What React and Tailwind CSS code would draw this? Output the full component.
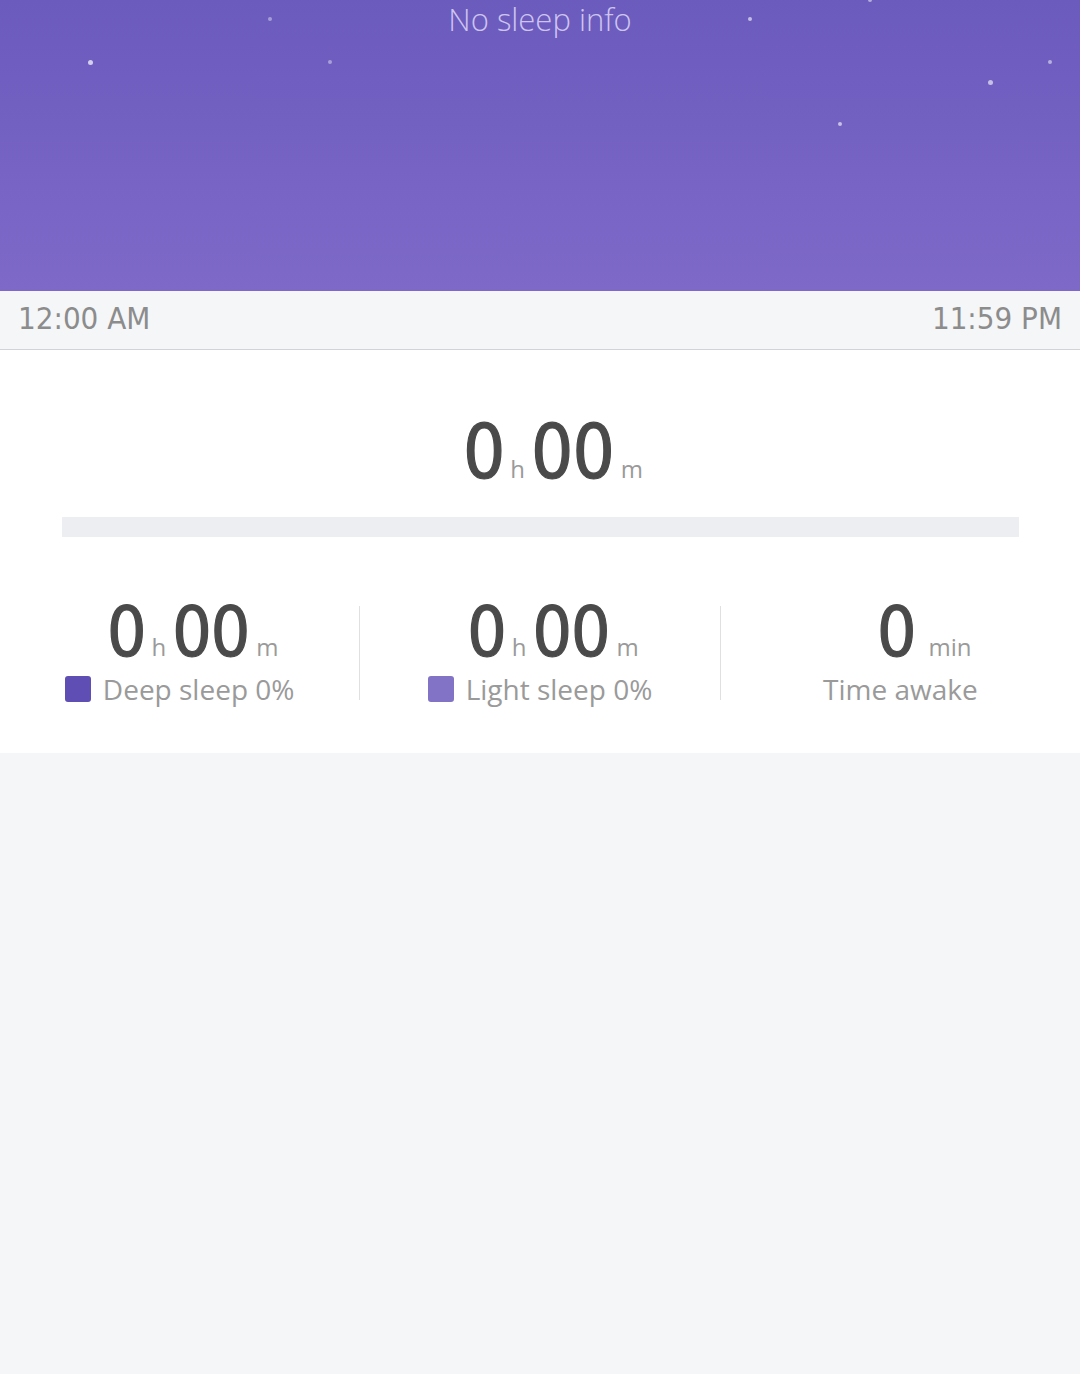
import React from "react";

const stars = [
  { x: 90, y: 62, s: 5, o: "opacity-70" },
  { x: 270, y: 19, s: 4, o: "opacity-40" },
  { x: 330, y: 62, s: 4, o: "opacity-40" },
  { x: 750, y: 19, s: 4, o: "opacity-60" },
  { x: 840, y: 124, s: 4, o: "opacity-60" },
  { x: 990, y: 82, s: 5, o: "opacity-60" },
  { x: 1050, y: 62, s: 4, o: "opacity-50" },
  { x: 870, y: 0, s: 4, o: "opacity-50" },
];

const digit = { fontFamily: "'DejaVu Sans Condensed', Roboto, sans-serif" };
const body = { fontFamily: "'Open Sans', 'Noto Sans', sans-serif" };

const HM = ({ size }) => (
  <div className="flex items-baseline leading-none" style={digit}>
    <span className={`${size} text-[#4a4a4a] tracking-[-1px] [-webkit-text-stroke:1.2px_#4a4a4a]`}>0</span>
    <span className="text-[24px] text-[#9a9a9a] mx-[6px]" style={body}>h</span>
    <span className={`${size} text-[#4a4a4a] tracking-[-1px] [-webkit-text-stroke:1.2px_#4a4a4a]`}>00</span>
    <span className="text-[24px] text-[#9a9a9a] ml-[7px]" style={body}>m</span>
  </div>
);

const Stat = ({ children, label, swatch }) => (
  <div className="flex-1 flex flex-col items-center">
    {children}
    <div className="mt-[4px] flex items-center gap-[12px] text-[28px] leading-[36px] text-[#9a9a9a]" style={body}>
      {swatch && <span className={`w-[26px] h-[26px] rounded-[3px] ${swatch}`} />}
      {label}
    </div>
  </div>
);

export default function App() {
  return (
    <div className="w-[1080px] min-h-[1374px] bg-[#f5f6f8]">
      {/* sky header */}
      <div className="relative h-[291px] bg-gradient-to-b from-[#6b5bbd] to-[#7e69c8] overflow-hidden">
        {stars.map((st, i) => (
          <span
            key={i}
            className={`absolute rounded-full bg-white ${st.o}`}
            style={{ left: st.x - st.s / 2, top: st.y - st.s / 2, width: st.s, height: st.s }}
          />
        ))}
        <div className="pt-[2px] text-center text-[31px] leading-[34px] text-[#cdc5f0] font-light" style={body}>
          No sleep info
        </div>
      </div>

      {/* time axis */}
      <div className="h-[59px] flex items-center justify-between px-[18px] pb-[3px] bg-[#f5f6f8] border-b border-[#d2d3d6] text-[31px] text-[#8c8c8c]" style={digit}>
        <span>12:00 AM</span>
        <span>11:59 PM</span>
      </div>

      {/* summary */}
      <div className="bg-white h-[403px] flex flex-col items-center">
        <div className="mt-[65px] pl-[26px]">
          <HM size="text-[74px]" />
        </div>
        <div className="mt-[28px] w-[957px] h-[20px] bg-[#eceef1]" />

        <div className="mt-[61px] w-full flex items-start">
          <Stat label="Deep sleep 0%" swatch="bg-[#5f4fb5]">
            <div className="pl-[26px]"><HM size="text-[69px]" /></div>
          </Stat>
          <div className="w-px h-[94px] mt-[8px] bg-[#e0e0e0]" />
          <Stat label="Light sleep 0%" swatch="bg-[#8273c6]">
            <div className="pl-[26px]"><HM size="text-[69px]" /></div>
          </Stat>
          <div className="w-px h-[94px] mt-[8px] bg-[#e0e0e0]" />
          <Stat label="Time awake">
            <div className="flex items-baseline leading-none pl-[48px]" style={digit}>
              <span className="text-[69px] text-[#4a4a4a] [-webkit-text-stroke:1.2px_#4a4a4a]">0</span>
              <span className="text-[24px] text-[#9a9a9a] ml-[12px]" style={body}>min</span>
            </div>
          </Stat>
        </div>
      </div>
    </div>
  );
}
